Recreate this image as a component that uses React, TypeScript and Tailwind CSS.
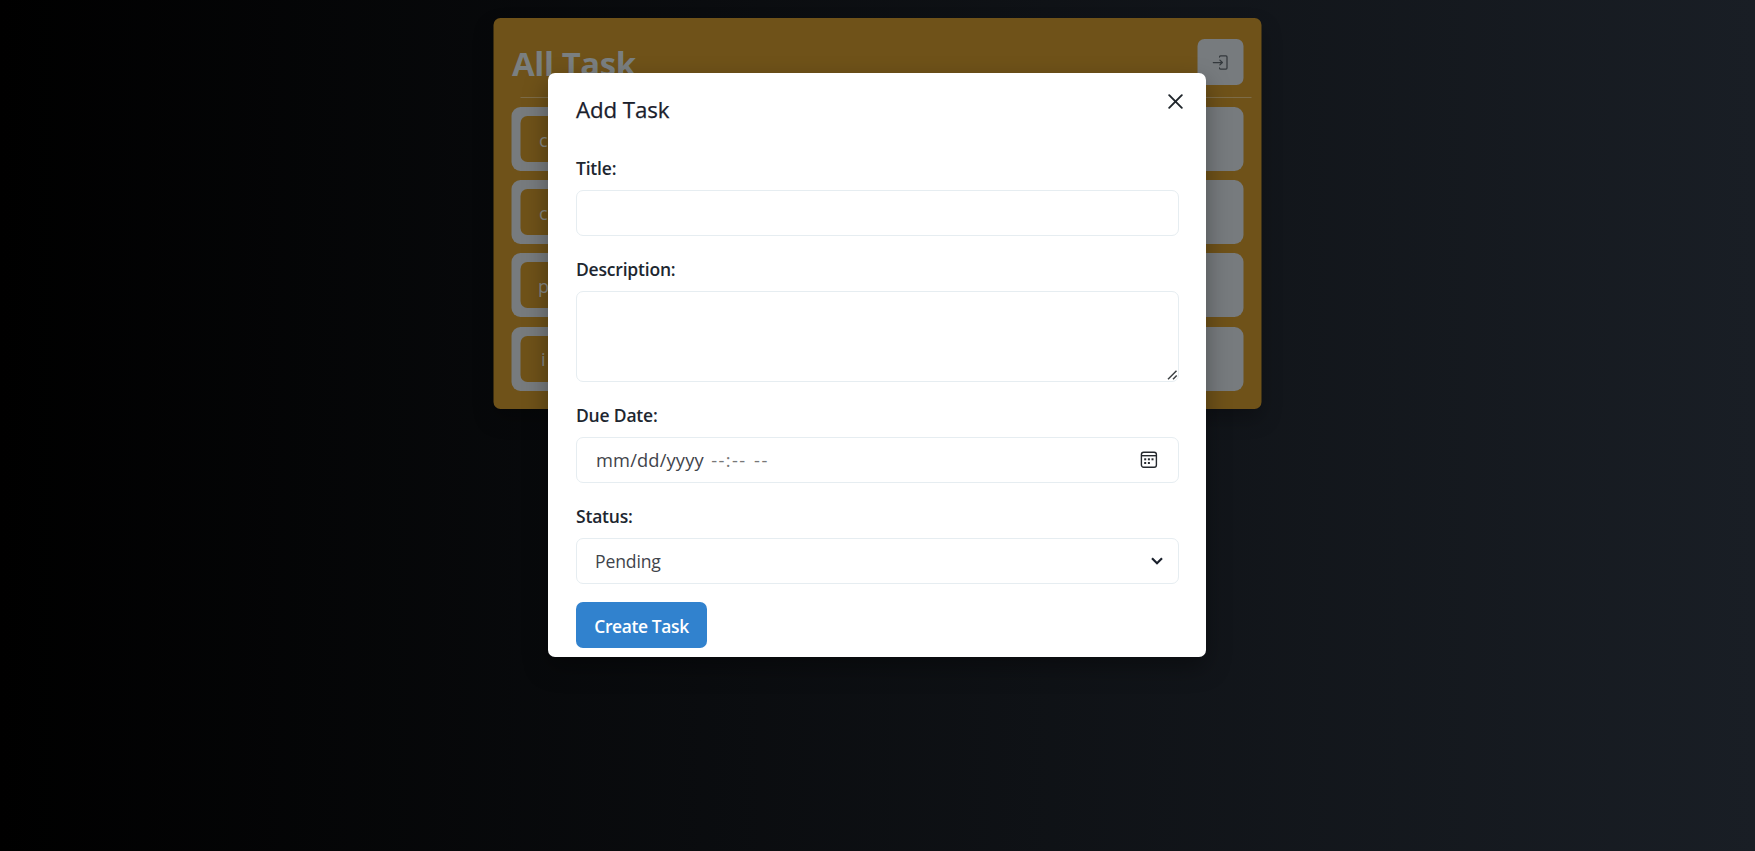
import React from "react";

const label = "flex h-[27px] items-center pt-[2px] text-[17.5px] tracking-[-0.2px] font-semibold text-[#20262f]";
const field = "w-full rounded-[7px] border border-[#e6edf1] bg-white";

const tasks = [
  { name: "c", pad: "pl-[19px]" },
  { name: "c", pad: "pl-[19px]" },
  { name: "p", pad: "pl-[18px]" },
  { name: "i", pad: "pl-[21px]" },
];

function LoginIcon() {
  return (
    <svg className="h-[17px] w-[17px]" viewBox="0 0 17 17" fill="none" stroke="#34393d" strokeWidth="1.25" strokeLinecap="round" strokeLinejoin="round">
      <path d="M8 3.1V2.9a1 1 0 0 1 1-1h5.5a1 1 0 0 1 1 1v11.2a1 1 0 0 1-1 1H9a1 1 0 0 1-1-1v-.2" />
      <path d="M1.8 8.5h9M8.4 6.1l2.5 2.4-2.5 2.4" />
    </svg>
  );
}

function CalendarIcon() {
  return (
    <svg className="h-[18px] w-[18px]" viewBox="0 0 18 18" fill="none" stroke="#25292e" strokeWidth="1.4">
      <rect x="1.4" y="1.2" width="15" height="15" rx="2.2" />
      <path d="M1.4 4.7h15" />
      <g fill="#25292e" stroke="none">
        <rect x="4.2" y="7.3" width="2" height="2" />
        <rect x="7.9" y="7.3" width="2" height="2" />
        <rect x="11.5" y="7.3" width="2" height="2" />
        <rect x="4.2" y="11" width="2" height="2" />
        <rect x="7.9" y="11" width="2" height="2" />
      </g>
    </svg>
  );
}

export default function App() {
  return (
    <div className="relative h-[851px] w-[1755px] overflow-hidden bg-linear-to-r/srgb from-black to-[#191e25] pt-[18px] font-['Open_Sans','Noto_Sans',sans-serif]">
      <main className="mx-auto h-[391px] w-[768px] -translate-x-[0.5px] rounded-[7px] bg-[#6f5219] px-[18px] pt-[21px] shadow-[0_10px_20px_rgba(0,0,0,0.25)]">
        <header className="flex h-[46px] items-center justify-between">
          <h1 className="pt-[4px] pl-px text-[32.9px] leading-[46px] font-bold tracking-[-0.4px] text-[#7a7f80]">All Task</h1>
          <button className="flex h-[46px] w-[46px] items-center justify-center rounded-[7px] bg-[#777b7e]">
            <LoginIcon />
          </button>
        </header>
        <hr className="mt-[12px] ml-[9px] h-px w-[731px] border-0 bg-[#7d6c48]" />
        <ul className="mt-[9px] flex flex-col gap-[9.2px]">
          {tasks.map(({ name, pad }, i) => (
            <li key={i} className="h-[64px] rounded-[9px] bg-[#777b7e] p-[9px]">
              <button className={`h-[46px] w-[120px] rounded-[7px] bg-[#6f5219] pt-[2px] text-left text-[18px] text-[#858783] ${pad}`}>{name}</button>
            </li>
          ))}
        </ul>
      </main>

      <section role="dialog" className="absolute top-[73px] left-[548.4px] h-[583.5px] w-[658px] rounded-[7px] bg-white pr-[27px] pl-[27.6px] pt-[23px] shadow-[0_10px_25px_rgba(0,0,0,0.35)]">
        <header className="flex h-[28px] items-center justify-between">
          <h2 className="-mt-px text-[22.3px] tracking-[-0.1px] text-[#1a202c] [-webkit-text-stroke:0.25px_#1a202c]">Add Task</h2>
          <button aria-label="Close" className="-mt-[17px] mr-[-7.5px] p-1">
            <svg className="h-[15px] w-[15px]" viewBox="0 0 15 15" stroke="#1f252b" strokeWidth="1.9" strokeLinecap="round">
              <path d="M1.2 1.2l12.6 12.6M13.8 1.2L1.2 13.8" />
            </svg>
          </button>
        </header>
        <form className="flex flex-col pt-[30px]">
          <label className={label}>Title:</label>
          <div className={`${field} mt-[9px] h-[46px]`} />
          <label className={`${label} mt-[19px]`}>Description:</label>
          <div className={`${field} mt-[9px] flex h-[91px] items-end justify-end`}>
            <svg className="h-[13px] w-[12px]" viewBox="0 0 12 13" stroke="#3c4043" strokeWidth="1.5">
              <path d="M2 11.2L10.5 2.7M7 11.2l3.7-3.7" />
            </svg>
          </div>
          <label className={`${label} mt-[19px]`}>Due Date:</label>
          <div className={`${field} mt-[9px] flex h-[46px] items-center justify-between pr-[20px] pl-[19px] text-[18.29px] text-[#3f444b]`}>
            <span className="flex gap-[7.5px] tracking-[0.15px]">
              <span>mm/dd/yyyy</span>
              <span className="tracking-[1.4px] text-[#777]">--:--</span>
              <span className="tracking-[1.4px] text-[#777]">--</span>
            </span>
            <CalendarIcon />
          </div>
          <label className={`${label} mt-[19px]`}>Status:</label>
          <div className={`${field} mt-[9px] flex h-[46px] items-center justify-between pr-[15px] pl-[18px] text-[17.6px] tracking-[-0.15px] text-[#3f444b]`}>
            <span>Pending</span>
            <svg className="h-[12px] w-[12px]" viewBox="0 0 12 12" fill="none" stroke="#1a202c" strokeWidth="2.2">
              <path d="M1 3.2l5 5 5-5" />
            </svg>
          </div>
          <button type="button" className="mt-[18px] h-[46px] w-[131px] rounded-[7px] bg-[#3182ce] pt-[2px] text-[17.4px] font-semibold tracking-[-0.35px] text-white">Create Task</button>
        </form>
      </section>
    </div>
  );
}
